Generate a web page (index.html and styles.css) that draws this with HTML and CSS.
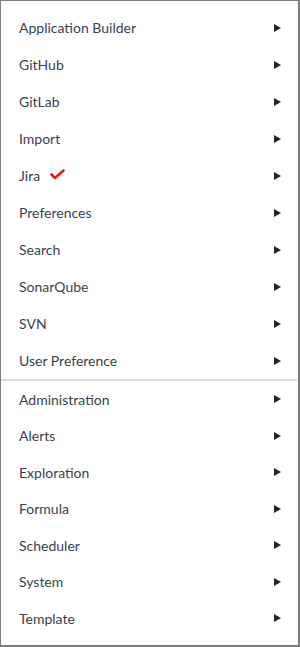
FILE: index.html
```html
<!DOCTYPE html>
<html>
<head>
<meta charset="utf-8">
<link rel="stylesheet" href="styles.css">
</head>
<body>
<div class="menu">
  <ul class="group group-a">
    <li class="item"><span class="label">Application Builder</span><span class="arrow"></span></li>
    <li class="item"><span class="label">GitHub</span><span class="arrow"></span></li>
    <li class="item"><span class="label">GitLab</span><span class="arrow"></span></li>
    <li class="item"><span class="label">Import</span><span class="arrow"></span></li>
    <li class="item"><span class="label">Jira<svg class="check" width="15" height="11" viewBox="0 0 15 11"><path d="M1.5 5.5 L5 9 L13.5 1.5" fill="none" stroke="#e8141c" stroke-width="2.6" stroke-linecap="round" stroke-linejoin="round"/></svg></span><span class="arrow"></span></li>
    <li class="item"><span class="label">Preferences</span><span class="arrow"></span></li>
    <li class="item"><span class="label">Search</span><span class="arrow"></span></li>
    <li class="item"><span class="label">SonarQube</span><span class="arrow"></span></li>
    <li class="item"><span class="label">SVN</span><span class="arrow"></span></li>
    <li class="item"><span class="label">User Preference</span><span class="arrow"></span></li>
  </ul>
  <div class="sep"></div>
  <ul class="group group-b">
    <li class="item"><span class="label">Administration</span><span class="arrow"></span></li>
    <li class="item"><span class="label">Alerts</span><span class="arrow"></span></li>
    <li class="item"><span class="label">Exploration</span><span class="arrow"></span></li>
    <li class="item"><span class="label">Formula</span><span class="arrow"></span></li>
    <li class="item"><span class="label">Scheduler</span><span class="arrow"></span></li>
    <li class="item"><span class="label">System</span><span class="arrow"></span></li>
    <li class="item"><span class="label">Template</span><span class="arrow"></span></li>
  </ul>
</div>
</body>
</html>
```
FILE: styles.css
```css
html, body {
  margin: 0;
  padding: 0;
  background: #fff;
}
.menu {
  box-sizing: border-box;
  width: 300px;
  height: 647px;
  border-style: solid;
  border-color: #7b7b7b;
  border-width: 1px 2px 2px 1px;
  padding-top: 8px;
  font-family: "Lato", "Liberation Sans", sans-serif;
  font-size: 14px;
  color: #3a3f4b;
  display: flex;
  flex-direction: column;
}
.group {
  list-style: none;
  margin: 0;
  padding: 0;
}
.item {
  display: flex;
  align-items: center;
  justify-content: space-between;
  padding: 0 17px 0 18px;
}
.group-a .item { height: 37px; }
.group-b .item { height: 36.5px; }
.label {
  display: flex;
  align-items: center;
}
.check {
  margin-left: 10px;
  margin-top: -3px;
}
.arrow {
  width: 0;
  height: 0;
  border-top: 4.5px solid transparent;
  border-bottom: 4.5px solid transparent;
  border-left: 7px solid #1e2535;
}
.sep {
  height: 2px;
  background: #dcdcdc;
  margin-right: 1px;
}
```
